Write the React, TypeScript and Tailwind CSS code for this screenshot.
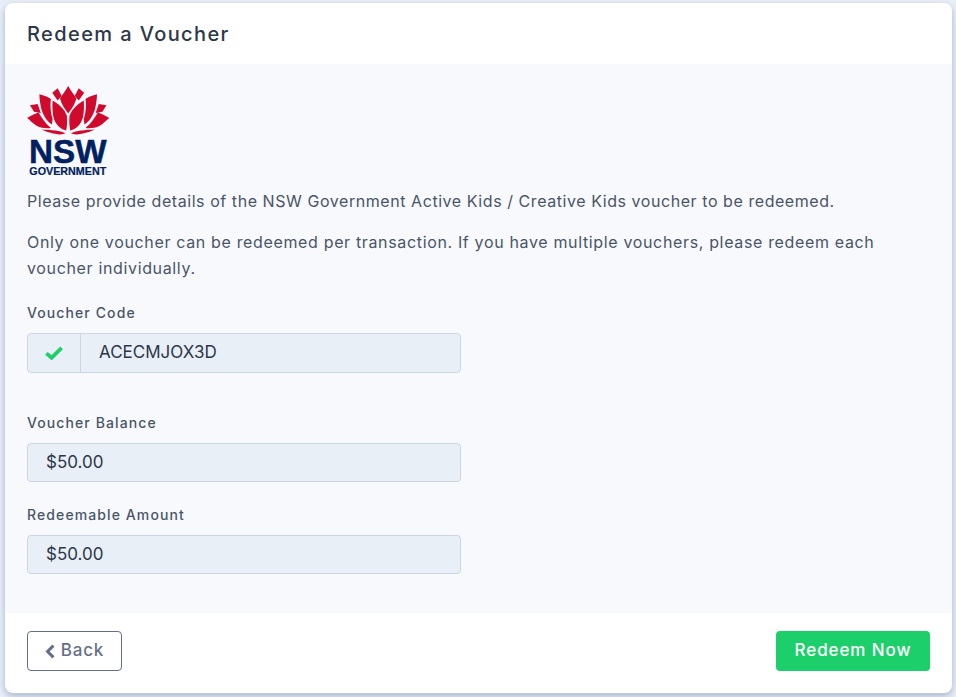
const LotusHalf = () => {
  return (
    <>
      <path d="M25.3 7.7 L30.7 3.3 L34.7 11 L30.6 15.4 Z" />
      <path d="M12.4 9.2 C17 10.2 21 12 23.9 14 C23 20 23.5 28 25.6 34 L25 39.6 C20 36.6 16 30 14.4 24 C13.2 19 12.5 14 12.4 9.2 Z" />
      <path d="M3 20.3 L10.6 19 L13.8 28 L7 26.8 Z" />
      <path d="M0.2 33 C4 30.6 8 28.8 11.6 27.6 C14.6 33 18.4 38.6 24 43 C19 43.6 14 43 10 41 C6 38.6 3 35.2 0.2 33 Z" />
      <path d="M25.6 15.4 C31 18.2 37.6 24 39.8 30.4 C40.4 35 40.2 40 39.2 45.4 C32.6 44 28 38.6 26.4 32 C25.4 26.6 25.2 21 25.6 15.4 Z" />
      <path d="M14.5 44.4 C19 44.6 24 44.8 28.5 45.6 C32 46.2 35.5 47 38.4 48.4 C34 49.8 30 49.6 26.5 48.6 C22.5 47.6 18.5 46.2 14.5 44.4 Z" />
    </>
  );
};

const NswLogo = () => {
  return (
    <svg width="82" height="92" viewBox="0 0 82 92" className="block">
      <g fill="#cf0a2c">
        <path d="M41.2 1 C43.6 5.4 47 9.6 49.4 13.6 C48 19 44.6 24.4 41.2 28.4 C37.8 24.4 34.4 19 33 13.6 C35.4 9.6 38.8 5.4 41.2 1 Z" />
        <LotusHalf />
        <g transform="matrix(-1 0 0 1 82.4 0)">
          <LotusHalf />
        </g>
      </g>
      <g fill="#002060" stroke="#002060" fontFamily="'Liberation Sans', sans-serif" fontWeight="700">
        <text x="2" y="78" fontSize="34" strokeWidth="0.5" textLength="77.5" lengthAdjust="spacingAndGlyphs">NSW</text>
        <text x="2.3" y="90" fontSize="11" strokeWidth="0.2" textLength="77" lengthAdjust="spacingAndGlyphs">GOVERNMENT</text>
      </g>
    </svg>
  );
};

const Field = ({ label, value, className }: { label: string; value: string; className?: string }) => {
  return (
    <div className={className}>
      <label className="block text-[14px] leading-[20px] font-medium tracking-[1.1px] text-[#4a5568]">{label}</label>
      <div className="mt-[10px] flex h-[39px] w-[434px] items-center rounded-[4px] border border-[#cbd5e4] bg-[#e8eff7] px-[18px] text-[17px] text-[#2d3748]">
        {value}
      </div>
    </div>
  );
};

const App = () => {
  return (
    <div className="h-[697px] overflow-hidden bg-[#e8eff8] pt-[3px] pr-[4px] pl-[5px] font-['Inter',sans-serif]">
      <div className="h-[690px] overflow-hidden rounded-[8px] bg-white shadow-[0_3px_6px_1px_rgba(90,105,150,0.35)]">
        <header className="flex h-[61px] items-center px-[22px]">
          <h1 className="text-[20px] font-medium tracking-[1.4px] text-[#2d3748]">Redeem a Voucher</h1>
        </header>

        <main className="h-[549px] bg-[#f7f9fd] px-[22px] pt-[21px]">
          <NswLogo />
          <p className="mt-[12px] text-[16px] leading-[24px] tracking-[0.56px] text-[#4a5568]">
            Please provide details of the NSW Government Active Kids / Creative Kids voucher to be redeemed.
          </p>
          <p className="mt-[16px] w-[870px] text-[16px] leading-[26px] tracking-[0.65px] text-[#4a5568]">
            Only one voucher can be redeemed per transaction. If you have multiple vouchers, please redeem each voucher individually.
          </p>

          <div className="mt-[22px]">
            <label className="block text-[14px] leading-[20px] font-medium tracking-[1.1px] text-[#4a5568]">Voucher Code</label>
            <div className="mt-[10px] flex h-[40px] w-[434px] items-stretch overflow-hidden rounded-[4px] border border-[#cbd5e4] bg-[#e8eff7]">
              <div className="flex w-[53px] items-center justify-center border-r border-[#cbd5e4]">
                <svg width="18" height="14" viewBox="0 0 18 14" fill="none">
                  <path d="M1.4 7.4 L6.6 11.8 L16.6 1.8" stroke="#1fcf6b" strokeWidth="3.8" />
                </svg>
              </div>
              <div className="flex items-center pl-[18px] text-[17px] text-[#2d3748]">ACECMJOX3D</div>
            </div>
          </div>

          <Field label="Voucher Balance" value="$50.00" className="mt-[40px]" />
          <Field label="Redeemable Amount" value="$50.00" className="mt-[23px]" />
        </main>

        <footer className="flex h-[80px] items-start justify-between px-[22px] pt-[18px]">
          <button className="flex h-[40px] w-[95px] items-center justify-center gap-[6px] rounded-[4px] border border-[#64708a] text-[17px] font-medium tracking-[0.8px] text-[#64708a]">
            <svg width="10" height="15" viewBox="0 0 10 15" fill="none">
              <path d="M8.4 1.6 L2.6 7.5 L8.4 13.4" stroke="#64708a" strokeWidth="3" />
            </svg>
            Back
          </button>
          <button className="h-[40px] w-[154px] rounded-[4px] bg-[#1dcf6a] text-[17px] font-medium tracking-[0.9px] text-white">
            Redeem Now
          </button>
        </footer>
      </div>
    </div>
  );
};

export default App;
